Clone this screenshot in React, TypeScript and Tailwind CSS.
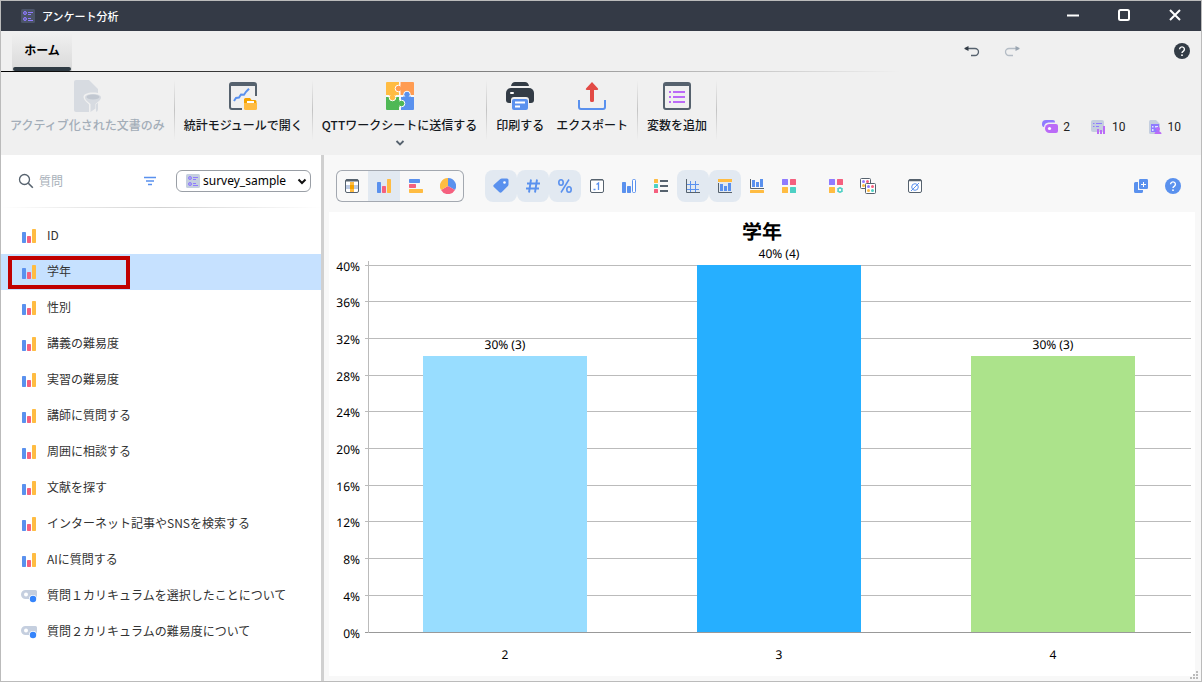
import type { ReactNode } from "react";

type IconProps = { children: ReactNode; box?: number; className?: string };

function Svg({ children, box = 16, className = "" }: IconProps) {
  return (
    <svg width={box} height={box} viewBox={`0 0 ${box} ${box}`} fill="none" aria-hidden="true" className={`shrink-0 ${className}`}>
      {children}
    </svg>
  );
}

const BLUE = "#5a91ee";
const RED = "#f5607f";
const YELLOW = "#ffbc42";
const DARK = "#333c46";
const SLATE = "#56626e";
const VIOLET = "#8f7bff";
const TEAL = "#4dd0c4";

function SurveyIcon({ bg }: { bg: string }) {
  return (
    <Svg box={14}>
      <rect width="14" height="14" rx="1.5" fill={bg} />
      <circle cx="4" cy="4" r="1.5" fill={VIOLET} fillOpacity="0.4" stroke={VIOLET} />
      <circle cx="4" cy="10" r="1.5" fill={VIOLET} fillOpacity="0.4" stroke={VIOLET} />
      <path d="M7 3.5h5M7 5.5h3M7 9.5h3M7 11.5h5" stroke={VIOLET} />
    </Svg>
  );
}

function BarsIcon() {
  return (
    <Svg box={14}>
      <rect x="0" y="3" width="4" height="11" rx="0.7" fill={BLUE} />
      <rect x="5" y="7" width="4" height="7" rx="0.7" fill={RED} />
      <rect x="10" y="0" width="4" height="14" rx="0.7" fill={YELLOW} />
    </Svg>
  );
}

function TextAnswerIcon() {
  return (
    <Svg>
      <path d="M4.500 2H14.500a1.500 1.500 0 0 1 1.500 1.500V11H4.500a4.500 4.500 0 0 1 0-9z" fill="#c5cfdf" />
      <circle cx="5" cy="6.500" r="2" fill="#fff" />
      <circle cx="12" cy="11" r="4" fill="#fff" />
      <circle cx="12" cy="11" r="3.200" fill="#3584fb" />
    </Svg>
  );
}

function HelpIcon({ color }: { color: string }) {
  return (
    <Svg>
      <circle cx="8" cy="8" r="8" fill={color} />
      <path d="M5.600 6.300a2.400 2.400 0 1 1 3.600 2.100c-.8.5-1.200.8-1.200 1.600" stroke="#fff" strokeWidth="1.400" />
      <circle cx="8" cy="12.200" r="0.900" fill="#fff" />
    </Svg>
  );
}

const icons = {
  document: (
    <Svg box={32}>
      <path d="M5 0h13l9 9v20a3 3 0 0 1-3 3H5a2 2 0 0 1-2-2V2a2 2 0 0 1 2-2z" fill="#d7dbe1" />
      <path d="M12.500 17c0-3 4-4.500 9.500-4.500s9.500 1.500 9.500 4.500c0 3-5 6-6.500 7.500V32h-7v-7.500C16.500 23 12.500 20 12.500 17z" fill="#f0f0f0" />
      <path d="M14 17.500c0-2 3-3.500 8-3.500s8 1.500 8 3.500c0 2.500-3.500 4.500-5.500 6.500v4.500L19.500 32v-8c-2-2-5.500-4-5.500-6.500z" fill="#d7dbe1" />
      <ellipse cx="22" cy="17" rx="6.500" ry="2.500" fill="#c2c8d1" />
    </Svg>
  ),
  stats: (
    <Svg box={32}>
      <path d="M15 29H5a2 2 0 0 1-2-2V5a2 2 0 0 1 2-2h22a2 2 0 0 1 2 2v11" stroke={SLATE} strokeWidth="2" />
      <path d="M3 4h26v2H3z" fill={SLATE} />
      <path d="M7 21l2-3 3-.5 2-3 3 .3 2-3 3-3" stroke={BLUE} strokeWidth="2" />
      <path d="M17 19.500a1.500 1.500 0 0 1 1.500-1.500H23l1.500 2H28a1.500 1.500 0 0 1 1.500 1.500V29H17z" fill="#f5a300" />
      <path d="M20 21h7v3h-7z" fill="#fff" />
      <path d="M17 23h13v5.500a1.500 1.500 0 0 1-1.500 1.500h-10a1.500 1.500 0 0 1-1.500-1.500z" fill={YELLOW} />
    </Svg>
  ),
  puzzle: (
    <Svg box={32}>
      <path d="M3 2h12v13H2V3a1 1 0 0 1 1-1z" fill={YELLOW} />
      <path d="M16 2h13a1 1 0 0 1 1 1v12H16z" fill="#ff9c52" />
      <path d="M2 17h13v13H3a1 1 0 0 1-1-1z" fill="#4fb855" />
      <path d="M17 17h13v12a1 1 0 0 1-1 1H17z" fill={BLUE} />
      <path d="M16 2v28M2 16h28" stroke="#fff" strokeWidth="1" />
      <circle cx="14.500" cy="8.500" r="3.300" fill="#ff9c52" stroke="#fff" />
      <path d="M16.500 5h3v7h-3z" fill="#ff9c52" />
      <circle cx="8.500" cy="17.500" r="3.300" fill={YELLOW} stroke="#fff" />
      <path d="M5 12h7v3.500H5z" fill={YELLOW} />
      <circle cx="23" cy="14.500" r="3.300" fill={BLUE} stroke="#fff" />
      <path d="M19 16.500h8V20h-8z" fill={BLUE} />
      <circle cx="17.500" cy="23.500" r="3.300" fill="#4fb855" stroke="#fff" />
      <path d="M12 20h3.500v7H12z" fill="#4fb855" />
    </Svg>
  ),
  printer: (
    <Svg box={32}>
      <path d="M7 6c.5-2.500 2-4 4-4h10c2 0 3.500 1.500 4 4z" fill={DARK} />
      <path d="M7 8h18a5 5 0 0 1 5 5v7a3 3 0 0 1-3 3H5a3 3 0 0 1-3-3v-7a5 5 0 0 1 5-5z" fill={DARK} />
      <rect x="6" y="12" width="4" height="2" rx="1" fill="#fff" />
      <path d="M7 24v-4a3 3 0 0 1 3-3h12a3 3 0 0 1 3 3v4z" fill="#f0f0f0" />
      <rect x="8" y="19" width="16" height="11" rx="2" fill={BLUE} />
      <path d="M11 22.500h10M11 26.500h5" stroke="#fff" strokeWidth="2" />
    </Svg>
  ),
  exportFile: (
    <Svg box={32}>
      <path d="M3 20v7a2 2 0 0 0 2 2h22a2 2 0 0 0 2-2v-7" stroke={BLUE} strokeWidth="2" />
      <path d="M16 2l6 6.500a1 1 0 0 1-.7 1.500H18v10.500a1.500 1.500 0 0 1-1.500 1.500h-1a1.500 1.500 0 0 1-1.500-1.500V10h-3.300a1 1 0 0 1-.7-1.500z" fill="#e24a45" />
    </Svg>
  ),
  variables: (
    <Svg box={32}>
      <rect x="3" y="3" width="26" height="26" rx="2" stroke={SLATE} strokeWidth="2" />
      <path d="M3 4h26v2H3z" fill={SLATE} />
      <path d="M8 12h2M8 17h2M8 22h2M12 12h12M12 17h12M12 22h12" stroke="#bb6bf7" strokeWidth="2" />
    </Svg>
  ),
  table: (
    <Svg>
      <rect x="1.500" y="1.500" width="13" height="13" rx="1.500" fill="#fff" stroke={SLATE} />
      <path d="M2 2.500h12" stroke={SLATE} strokeWidth="2" />
      <path d="M6 4h4v10H6z" fill="#ffd98a" />
      <path d="M2 7h12v4H2z" fill="#bdcbe4" />
      <path d="M6 4h4v3H6zM6 11h4v3H6z" fill={YELLOW} />
      <path d="M6 7h4v4H6z" fill="#f5a300" />
    </Svg>
  ),
  hbars: (
    <Svg>
      <rect x="1" y="1" width="11" height="4" rx="0.700" fill={BLUE} />
      <rect x="1" y="6" width="7" height="4" rx="0.700" fill={RED} />
      <rect x="1" y="11" width="14" height="4" rx="0.700" fill={YELLOW} />
    </Svg>
  ),
  pie: (
    <Svg>
      <path d="M8 8V0a8 8 0 0 1 7 12z" fill={BLUE} />
      <path d="M8 8l7 4a8 8 0 0 1-14 0z" fill={RED} />
      <path d="M8 8l-7 4A8 8 0 0 1 8 0z" fill={YELLOW} />
    </Svg>
  ),
  tag: (
    <Svg>
      <path d="M9 .5h5a1.500 1.500 0 0 1 1.500 1.500v4.500a2 2 0 0 1-.6 1.500l-6 6a2 2 0 0 1-2.800 0L.9 9a1.500 1.500 0 0 1 0-2.200L7 1.200A3 3 0 0 1 9 .5z" fill={BLUE} />
      <circle cx="11.500" cy="4.500" r="1.300" fill="#fff" />
    </Svg>
  ),
  hash: (
    <Svg>
      <path d="M6 1.500L4 14.500M12 1.500L10 14.500M2 5.500h13M1 10.500h13" stroke={BLUE} strokeWidth="1.900" />
    </Svg>
  ),
  percent: (
    <Svg>
      <ellipse cx="4" cy="4.500" rx="2.200" ry="2.700" stroke={BLUE} strokeWidth="1.600" />
      <ellipse cx="12" cy="11.500" rx="2.200" ry="2.700" stroke={BLUE} strokeWidth="1.600" />
      <path d="M12 1.500L4 14.500" stroke={BLUE} strokeWidth="1.500" />
    </Svg>
  ),
  decimal: (
    <Svg>
      <rect x="1.500" y="1.500" width="13" height="13" rx="1.500" fill="#fff" stroke={SLATE} />
      <path d="M2 2h12" stroke={SLATE} strokeWidth="1" />
      <path d="M4.500 11.500h2M7.500 6.500l2-1.500v7" stroke={BLUE} strokeWidth="1.300" />
    </Svg>
  ),
  barsOutline: (
    <Svg>
      <rect x="1" y="4" width="4" height="11" rx="0.700" fill={BLUE} />
      <rect x="6" y="8" width="4" height="7" rx="0.700" fill={BLUE} />
      <rect x="11.500" y="1.500" width="3" height="13" rx="1" fill="#fff" stroke={BLUE} />
    </Svg>
  ),
  legend: (
    <Svg>
      <rect x="1" y="1" width="4" height="4" rx="0.500" fill={YELLOW} />
      <rect x="1" y="6" width="4" height="4" rx="0.500" fill={TEAL} />
      <rect x="1" y="11" width="4" height="4" rx="0.500" fill={RED} />
      <path d="M7 3h8M7 8h8M7 13h8" stroke={SLATE} strokeWidth="2" />
    </Svg>
  ),
  grid: (
    <Svg>
      <path d="M1.500 1v13.500H15" stroke={SLATE} />
      <path d="M5.500 3v11M10.500 3v11M2 6.500h12M2 11.500h12" stroke={BLUE} />
    </Svg>
  ),
  titleTop: (
    <Svg>
      <rect x="1" y="1" width="14" height="3" fill={YELLOW} />
      <path d="M1.500 5v9.500H15" stroke={SLATE} />
      <path d="M3 6h3v7H3zM7 8h3v5H7zM11 5h3v8h-3z" fill={BLUE} />
    </Svg>
  ),
  titleBottom: (
    <Svg>
      <rect x="1" y="12" width="14" height="3" rx="0.500" fill={YELLOW} />
      <path d="M1.500 1v9.500H15" stroke={SLATE} />
      <path d="M3 2h3v7H3zM7 4h3v5H7zM11 1h3v8h-3z" fill={BLUE} />
    </Svg>
  ),
  palette: (
    <Svg>
      <rect x="1" y="1" width="6" height="6" rx="0.500" fill={VIOLET} />
      <rect x="9" y="1" width="6" height="6" rx="0.500" fill={RED} />
      <rect x="1" y="9" width="6" height="6" rx="0.500" fill={YELLOW} />
      <rect x="9" y="9" width="6" height="6" rx="0.500" fill={TEAL} />
    </Svg>
  ),
  paletteSettings: (
    <Svg>
      <rect x="1" y="1" width="6" height="6" rx="0.500" fill={VIOLET} />
      <rect x="9" y="1" width="6" height="6" rx="0.500" fill={RED} />
      <rect x="1" y="9" width="6" height="6" rx="0.500" fill={YELLOW} />
      <circle cx="12" cy="12" r="2" stroke={TEAL} strokeWidth="1.500" />
      <path d="M12 9v1M12 14v1M9.400 10.500l.9.500M13.700 13l.9.500M9.400 13.500l.9-.5M13.700 11l.9-.5" stroke={TEAL} />
    </Svg>
  ),
  paletteCopy: (
    <Svg>
      <rect x="0.500" y="0.500" width="10" height="10" rx="1" fill="#fff" stroke={SLATE} />
      <circle cx="3.500" cy="3.500" r="1.500" fill={VIOLET} />
      <circle cx="7.500" cy="3.500" r="1.500" fill={RED} />
      <circle cx="3.500" cy="7.500" r="1.500" fill={YELLOW} />
      <rect x="5.500" y="5.500" width="10" height="10" rx="1" fill="#fff" stroke={SLATE} />
      <circle cx="8.500" cy="8.500" r="1.500" fill={VIOLET} />
      <circle cx="12.500" cy="8.500" r="1.500" fill={RED} />
      <circle cx="8.500" cy="12.500" r="1.500" fill={YELLOW} />
      <circle cx="12.500" cy="12.500" r="1.500" fill={TEAL} />
    </Svg>
  ),
  exclude: (
    <Svg>
      <rect x="1.500" y="1.500" width="13" height="13" rx="1.500" fill="#fff" stroke={SLATE} />
      <path d="M2 2.500h12" stroke={SLATE} strokeWidth="1.500" />
      <circle cx="8" cy="9" r="3.300" stroke={BLUE} />
      <path d="M4 13l8-8" stroke={BLUE} />
    </Svg>
  ),
  copyAdd: (
    <Svg>
      <path d="M2.500 4H5v8h5v1.500a1.500 1.500 0 0 1-1.500 1.500h-6A1.500 1.500 0 0 1 1 13.500v-8A1.500 1.500 0 0 1 2.500 4z" fill={BLUE} />
      <rect x="6" y="1" width="9" height="10" rx="1.200" fill={BLUE} />
      <path d="M8 6.500h5M10.500 4v5" stroke="#fff" />
    </Svg>
  ),
  multi: (
    <Svg>
      <path d="M0 5A4 4 0 0 1 4 1h7a2 2 0 0 1 2 2v.5H6.500A5 5 0 0 0 2 8H1.500A3 3 0 0 1 0 5z" fill={VIOLET} />
      <path d="M7.500 5H14a2 2 0 0 1 2 2v5a2 2 0 0 1-2 2H7.500a4.500 4.500 0 0 1 0-9z" fill="#bb6bf7" />
      <circle cx="7.500" cy="9.500" r="1.600" fill="#fff" />
    </Svg>
  ),
  sheetBars: (
    <Svg>
      <rect x="0" y="1" width="13" height="12" rx="2" fill="#c5cfdf" />
      <path d="M2 4.500h1.500M5 4.500h6M2 7.500h1.500M5 7.500h3" stroke={VIOLET} />
      <path d="M6 10h2v5H6zM9 11h2v4H9zM12 7h2v8h-2z" fill="#bb6bf7" />
    </Svg>
  ),
  sheetUser: (
    <Svg>
      <path d="M3.500 1H9l4 4v10H3.500A1.500 1.500 0 0 1 2 13.500v-11A1.500 1.500 0 0 1 3.500 1z" fill="#c5cfdf" />
      <path d="M4 5h8v8H4z" fill={VIOLET} />
      <path d="M5 7h1.500v1.500H5zM8 7h3v1.500H8zM5 10h1.500v2H5z" fill="#dfe3ff" />
      <circle cx="11" cy="10" r="2" fill="#bb6bf7" />
      <path d="M7.500 15c0-2 1.500-2.800 3.500-2.800s3.500.8 3.500 2.800z" fill="#bb6bf7" />
    </Svg>
  ),
};

function Separator() {
  return <div className="h-[60px] w-px shrink-0 bg-linear-to-b from-transparent via-[#c4c4c4] to-transparent" />;
}

type RibbonButtonProps = { icon: ReactNode; label: string; disabled?: boolean; menu?: boolean };

function RibbonButton({ icon, label, disabled = false, menu = false }: RibbonButtonProps) {
  return (
    <button
      type="button"
      disabled={disabled}
      className={`flex flex-col items-center whitespace-nowrap text-[12px] leading-[18px] font-medium ${disabled ? "text-[#a3adb8]" : "text-[#15191e]"}`}
    >
      {icon}
      <span className="mt-1">{label}</span>
      {menu && (
        <Svg box={12} className="mt-[3px]">
          <path d="M2.500 4l3.500 3.500L9.500 4" stroke={SLATE} strokeWidth="1.800" />
        </Svg>
      )}
    </button>
  );
}

const ribbonGroups: RibbonButtonProps[][] = [
  [{ icon: icons.document, label: "アクティブ化された文書のみ", disabled: true }],
  [{ icon: icons.stats, label: "統計モジュールで開く" }],
  [{ icon: icons.puzzle, label: "QTTワークシートに送信する", menu: true }],
  [
    { icon: icons.printer, label: "印刷する" },
    { icon: icons.exportFile, label: "エクスポート" },
  ],
  [{ icon: icons.variables, label: "変数を追加" }],
];

const counts = [
  { icon: icons.multi, value: 2, label: "複数回答" },
  { icon: icons.sheetBars, value: 10, label: "質問数" },
  { icon: icons.sheetUser, value: 10, label: "回答者数" },
];

const questions = [
  { text: "ID" },
  { text: "学年", selected: true },
  { text: "性別" },
  { text: "講義の難易度" },
  { text: "実習の難易度" },
  { text: "講師に質問する" },
  { text: "周囲に相談する" },
  { text: "文献を探す" },
  { text: "インターネット記事やSNSを検索する" },
  { text: "AIに質問する" },
  { text: "質問１カリキュラムを選択したことについて", open: true },
  { text: "質問２カリキュラムの難易度について", open: true },
];

function TitleBar() {
  return (
    <header className="flex h-[30px] shrink-0 items-center gap-[7px] bg-[#343a46] pr-px pl-5 text-white">
      <SurveyIcon bg="#4b5468" />
      <h1 className="flex-1 text-[11px] font-medium">アンケート分析</h1>
      <div className="flex pb-[2px]">
        <button type="button" aria-label="最小化" className="flex w-[51px] justify-center">
          <Svg box={14}><path d="M1 7.500h12" stroke="#fff" strokeWidth="2" /></Svg>
        </button>
        <button type="button" aria-label="最大化" className="flex w-[51px] justify-center">
          <Svg box={14}><rect x="2" y="2" width="10" height="10" rx="1.500" stroke="#fff" strokeWidth="2" /></Svg>
        </button>
        <button type="button" aria-label="閉じる" className="flex w-[51px] justify-center">
          <Svg box={14}><path d="M2 2l10 10M12 2L2 12" stroke="#fff" strokeWidth="2" /></Svg>
        </button>
      </div>
    </header>
  );
}

function TabRow() {
  return (
    <div className="flex h-10 shrink-0 items-center bg-[#f0f0f0] pr-[11px] pl-[11px]">
      <button type="button" className="flex h-[38px] w-[60px] flex-col self-end bg-linear-to-b from-[#f0f0f0] to-[#d9d9d9] px-px text-[12px] font-bold text-black">
        <span className="flex flex-1 items-center justify-center self-stretch">ホーム</span>
        <span className="h-1 self-stretch rounded-sm bg-[#2f3b44]" />
      </button>
      <div className="ml-auto flex items-center gap-6">
        <button type="button" aria-label="元に戻す">
          <Svg>
            <path d="M2 5.500h9a3.500 3.500 0 0 1 0 7H7" stroke={SLATE} strokeWidth="1.300" />
            <path d="M4.500 3v5L.5 6V5z" fill={DARK} />
          </Svg>
        </button>
        <button type="button" aria-label="やり直し" disabled>
          <Svg>
            <path d="M14 5.500H5a3.500 3.500 0 0 0 0 7h4" stroke="#b4bcc5" strokeWidth="1.300" />
            <path d="M11.500 3v5l4-2V5z" fill="#9aa5b1" />
          </Svg>
        </button>
        <button type="button" aria-label="ヘルプ" className="ml-[130px]">
          <HelpIcon color={DARK} />
        </button>
      </div>
    </div>
  );
}

function Ribbon() {
  return (
    <div className="flex h-[83px] shrink-0 items-start bg-[#f0f0f0] pt-2">
      {ribbonGroups.map((group, i) => (
        <div key={i} className="flex">
          <div className="flex items-start gap-3 px-[9px]">
            {group.map((item) => <RibbonButton key={item.label} {...item} />)}
          </div>
          <Separator />
        </div>
      ))}
      <dl className="ml-auto flex gap-[21px] pt-[38px] pr-5">
        {counts.map((c) => (
          <div key={c.label} className="flex items-center gap-[5px]">
            <dt aria-label={c.label}>{c.icon}</dt>
            <dd className="font-[Roboto] text-[12px] leading-[18px] text-[#222]">{c.value}</dd>
          </div>
        ))}
      </dl>
    </div>
  );
}

function Sidebar() {
  return (
    <aside className="flex w-[323px] shrink-0 flex-col border-r-[3px] border-[#d0d0d0] bg-white">
      <div className="flex h-[52px] shrink-0 items-center pr-[10px] pl-[17px]">
        <label htmlFor="question-search" aria-label="質問を検索">
          <Svg>
            <circle cx="6.500" cy="6.500" r="5" stroke={SLATE} strokeWidth="1.300" />
            <path d="M10.300 10.300l4.500 4.500" stroke={SLATE} strokeWidth="1.600" />
          </Svg>
        </label>
        <input
          id="question-search"
          type="text"
          placeholder="質問"
          className="ml-[5px] w-0 flex-1 bg-transparent text-[12px] leading-4 outline-none placeholder:text-[#a8b0b9]"
        />
        <button type="button" aria-label="絞り込み" className="mr-[18px]">
          <Svg><path d="M2 4.500h12M4 8h8M6 11.500h4" stroke={BLUE} strokeWidth="1.300" /></Svg>
        </button>
        <div className="relative flex items-center">
          <span className="pointer-events-none absolute left-[10px]"><SurveyIcon bg="#c5cfdf" /></span>
          <select
            aria-label="データセット"
            className="h-[22px] w-[135px] appearance-none rounded-md border border-[#9a9fa6] bg-white pr-5 pb-px pl-[26px] font-['Noto_Sans'] text-[12px] leading-4 text-black"
          >
            <option>survey_sample</option>
          </select>
          <Svg box={10} className="pointer-events-none absolute right-1">
            <path d="M1.500 3.500L5 7l3.500-3.500" stroke="#111" strokeWidth="2" />
          </Svg>
        </div>
      </div>
      <div className="h-px shrink-0 bg-linear-to-r from-transparent via-[#d2d2d2] to-transparent" />
      <ul className="pt-[10px]">
        {questions.map((q) => (
          <li key={q.text} className={`relative ${q.selected ? "bg-[#c6e1ff]" : ""}`}>
            <button type="button" className="flex h-9 w-full items-center pl-5 text-left text-[12px] whitespace-nowrap text-[#333]">
              <span className="flex w-[26px]">{q.open ? <TextAnswerIcon /> : <span className="pl-px"><BarsIcon /></span>}</span>
              <span className="pb-[2px]">{q.text}</span>
            </button>
            {q.selected && <span className="pointer-events-none absolute top-[2px] left-[7px] h-[33px] w-[122px] border-4 border-[#c00000]" />}
          </li>
        ))}
      </ul>
    </aside>
  );
}

type Tool = { label: string; icon: ReactNode; on?: boolean };

const chartTypes: Tool[] = [
  { label: "表", icon: icons.table },
  { label: "棒グラフ", icon: <BarsIcon />, on: true },
  { label: "横棒グラフ", icon: icons.hbars },
  { label: "円グラフ", icon: icons.pie },
];

const toolGroups: Tool[][] = [
  [
    { label: "ラベル", icon: icons.tag, on: true },
    { label: "度数", icon: icons.hash, on: true },
    { label: "割合", icon: icons.percent, on: true },
    { label: "小数点", icon: icons.decimal },
    { label: "棒の表示", icon: icons.barsOutline },
    { label: "凡例", icon: icons.legend },
    { label: "グリッド線", icon: icons.grid, on: true },
    { label: "タイトル", icon: icons.titleTop, on: true },
    { label: "軸タイトル", icon: icons.titleBottom },
    { label: "配色", icon: icons.palette },
  ],
  [
    { label: "配色の設定", icon: icons.paletteSettings },
    { label: "配色をコピー", icon: icons.paletteCopy },
  ],
  [{ label: "欠損値を除外", icon: icons.exclude }],
];

function ToolButton({ tool }: { tool: Tool }) {
  return (
    <button
      type="button"
      aria-label={tool.label}
      aria-pressed={tool.on}
      className={`flex h-8 w-8 items-center justify-center rounded-lg ${tool.on ? "bg-[#e2e9f1]" : ""}`}
    >
      {tool.icon}
    </button>
  );
}

function ChartTypeSwitch() {
  return (
    <div className="grid h-8 w-32 grid-cols-4 overflow-hidden rounded-md ring-1 ring-[#a3a8b0] ring-inset">
      {chartTypes.map((t) => (
        <button
          key={t.label}
          type="button"
          aria-label={t.label}
          aria-pressed={t.on}
          className={`my-px flex items-center justify-center ${t.on ? "bg-[#e2e9f1]" : ""}`}
        >
          {t.icon}
        </button>
      ))}
    </div>
  );
}

function ChartToolbar() {
  return (
    <div className="flex shrink-0 items-center px-3 pt-[15px] pb-[10px]">
      <ChartTypeSwitch />
      <div className="ml-[21px] flex gap-[15px]">
        {toolGroups.map((g, i) => (
          <div key={i} className="flex">
            {g.map((t) => <ToolButton key={t.label} tool={t} />)}
          </div>
        ))}
      </div>
      <div className="ml-auto flex">
        <ToolButton tool={{ label: "グラフを追加", icon: icons.copyAdd }} />
        <ToolButton tool={{ label: "ヘルプ", icon: <HelpIcon color={BLUE} /> }} />
      </div>
    </div>
  );
}

const bars = [
  { category: "2", percent: 30, count: 3, color: "#98ddff" },
  { category: "3", percent: 40, count: 4, color: "#26afff" },
  { category: "4", percent: 30, count: 3, color: "#ace38b" },
];

const plot = { left: 39, right: 862, top: 53, bottom: 420, slot: 274, bar: 164, max: 40 };

function Chart() {
  const yOf = (p: number) => Math.floor(plot.bottom - (p / plot.max) * (plot.bottom - plot.top));
  const ticks = Array.from({ length: 11 }, (_, i) => i * 4);
  return (
    <svg
      viewBox="0 0 866 464"
      role="img"
      aria-label="学年"
      className="block h-full w-full font-['Noto_Sans','Noto_Sans_CJK_JP',sans-serif]"
      fontSize="12"
      textRendering="geometricPrecision"
    >
      <text x="433" y="27" textAnchor="middle" fontSize="20" fontWeight="700">学年</text>
      {ticks.map((t) => (
        <g key={t}>
          <path d={`M${plot.left - 3} ${yOf(t) + 0.5}H${plot.right}`} stroke={t === 0 ? "#999" : "#bbb"} />
          <text x="31" y={yOf(t) + 6} textAnchor="end">{t}%</text>
        </g>
      ))}
      <path d={`M${plot.left + 0.5} ${plot.top - 4}V${plot.bottom + 1}`} stroke="#bbb" />
      {bars.map((b, i) => {
        const center = plot.left + 137 + i * plot.slot;
        const y = yOf(b.percent);
        return (
          <g key={b.category}>
            <rect x={center - plot.bar / 2} y={y} width={plot.bar} height={plot.bottom - y} fill={b.color} />
            <text x={center} y={y - 7} textAnchor="middle">{`${b.percent}% (${b.count})`}</text>
            <text x={center} y="447" textAnchor="middle">{b.category}</text>
          </g>
        );
      })}
    </svg>
  );
}

export default function App() {
  return (
    <div className="relative flex h-screen flex-col overflow-hidden border border-[#bbb] bg-[#f8f8f8] font-['Noto_Sans_CJK_JP',sans-serif]">
      <TitleBar />
      <TabRow />
      <div className="h-px shrink-0 bg-[#f0f0f0]">
        <div className="h-px w-3/4 bg-linear-to-r from-black to-transparent" />
      </div>
      <Ribbon />
      <div className="flex min-h-0 flex-1">
        <Sidebar />
        <main className="flex min-w-0 flex-1 flex-col">
          <ChartToolbar />
          <section className="mr-[6px] mb-[5px] ml-[5px] min-h-0 flex-1 bg-white">
            <Chart />
          </section>
        </main>
      </div>
      <svg width="8" height="8" viewBox="0 0 8 8" fill="#bbb" aria-hidden="true" className="absolute right-[3px] bottom-[2px]">
        <path d="M6 0h2v2H6zM3 3h2v2H3zM6 3h2v2H6zM0 6h2v2H0zM3 6h2v2H3zM6 6h2v2H6z" />
      </svg>
    </div>
  );
}
